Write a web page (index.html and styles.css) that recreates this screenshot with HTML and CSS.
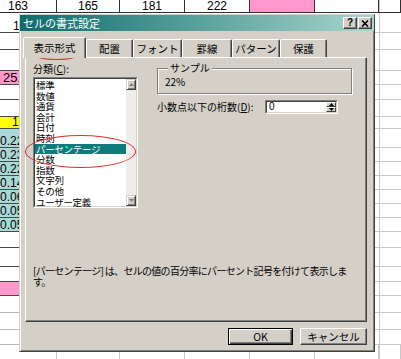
FILE: index.html
```html
<!DOCTYPE html>
<html lang="ja">
<head>
  <meta charset="UTF-8">
  <title>セルの書式設定</title>
  <link rel="stylesheet" href="styles.css">
</head>
<body>
  <!-- worksheet behind the dialog -->
  <div class="sheet">
    <div class="row top">
      <div class="col w1 first">163</div>
      <div class="col w2">165</div>
      <div class="col w3">181</div>
      <div class="col w3">222</div>
      <div class="col w3 pink"></div>
      <div class="col w4"></div>
      <div class="col"></div>
    </div>
    <div class="row h19"><div class="cell pl13">182</div></div>
    <div class="row h16"><div class="cell"></div></div>
    <div class="row h20"><div class="cell"></div></div>
    <div class="row h13"><div class="cell pink big">25.0</div></div>
    <div class="row h14"><div class="cell"></div></div>
    <div class="row h16"><div class="cell"></div></div>
    <div class="row h11"><div class="cell yellow pl12">1.00</div></div>
    <div class="row h18"><div class="cell teal">0.22</div></div>
    <div class="row h13"><div class="cell teal">0.23</div></div>
    <div class="row h13"><div class="cell teal">0.22</div></div>
    <div class="row h13"><div class="cell teal">0.14</div></div>
    <div class="row h13"><div class="cell teal">0.06</div></div>
    <div class="row h13"><div class="cell teal">0.05</div></div>
    <div class="row h13"><div class="cell teal">0.05</div></div>
    <div class="row h15"><div class="cell"></div></div>
    <div class="row h18"><div class="cell"></div></div>
    <div class="row h14"><div class="cell"></div></div>
    <div class="row h13"><div class="cell pink"></div></div>
    <div class="row h16"><div class="cell light"></div></div>
    <div class="row h16"><div class="cell light"></div></div>
    <div class="row h14"><div class="cell light"></div></div>
    <div class="row bottom">
      <div class="col w1"></div>
      <div class="col w2"></div>
      <div class="col w3"></div>
      <div class="col w3"></div>
      <div class="col w3"></div>
      <div class="col w4"></div>
      <div class="col"></div>
    </div>
  </div>

  <!-- Format Cells dialog -->
  <div class="dialog">
    <div class="titlebar">
      <span class="title">セルの書式設定</span>
      <div class="caption-buttons">
        <span class="cap-btn">?</span>
        <span class="cap-btn">
          <svg width="8" height="7" viewBox="0 0 8 7"><path d="M1 0.5 L7 6.5 M7 0.5 L1 6.5" stroke="#000" stroke-width="1.6"/></svg>
        </span>
      </div>
    </div>

    <div class="tabs">
      <div class="tab active">表示形式</div>
      <div class="tab t-align">配置</div>
      <div class="tab t-font">フォント</div>
      <div class="tab t-border">罫線</div>
      <div class="tab t-pattern">パターン</div>
      <div class="tab t-protect">保護</div>
    </div>

    <div class="panel">
      <div class="panel-main">
        <div class="category">
          <div class="label">分類(<u>C</u>):</div>
          <div class="listbox">
            <div class="listbox-inner">
              <ul class="list">
                <li>標準</li>
                <li>数値</li>
                <li>通貨</li>
                <li>会計</li>
                <li>日付</li>
                <li>時刻</li>
                <li class="selected">パーセンテージ</li>
                <li>分数</li>
                <li>指数</li>
                <li>文字列</li>
                <li>その他</li>
                <li>ユーザー定義</li>
              </ul>
              <div class="vscroll">
                <span class="sbtn"><svg width="5" height="3" viewBox="0 0 5 3"><polygon points="2.5,0 5,3 0,3" fill="#808080"/></svg></span>
                <span class="track"></span>
                <span class="sbtn"><svg width="5" height="3" viewBox="0 0 5 3"><polygon points="0,0 5,0 2.5,3" fill="#808080"/></svg></span>
              </div>
            </div>
          </div>
        </div>

        <div class="options">
          <fieldset class="sample">
            <legend>サンプル</legend>
            <div class="sample-value">22%</div>
          </fieldset>
          <div class="digits">
            <span class="digits-label">小数点以下の桁数(<u>D</u>):</span>
            <div class="spin">
              <div class="spin-inner">
                <span class="spin-value">0</span>
                <span class="spin-btns">
                  <span class="spin-btn"><svg width="5" height="3" viewBox="0 0 5 3"><polygon points="2.5,0 5,3 0,3" fill="#000"/></svg></span>
                  <span class="spin-btn"><svg width="5" height="3" viewBox="0 0 5 3"><polygon points="0,0 5,0 2.5,3" fill="#000"/></svg></span>
                </span>
              </div>
            </div>
          </div>
        </div>
      </div>

      <p class="desc">[パーセンテージ] は、セルの値の百分率にパーセント記号を付けて表示しま<br>す。</p>
    </div>

    <div class="buttons">
      <button class="btn default">OK</button>
      <button class="btn cancel">キャンセル</button>
    </div>
  </div>

  <!-- red annotation circles -->
  <div class="mark mark-tab"></div>
  <div class="mark mark-item"></div>
</body>
</html>
```

FILE: styles.css
```css
body {
  margin: 0;
  width: 401px;
  height: 359px;
  overflow: hidden;
  position: relative;
  font-family: "Noto Sans CJK JP", sans-serif;
  color: #000;
}

/* Worksheet */
.sheet {
  height: 359px;
  overflow: hidden;
  font: 12px "Liberation Sans", Arial, sans-serif;
  background: #fff linear-gradient(#c8c8c8, #c8c8c8) 379px 0 / 1px 100% no-repeat;
}

.row {
  display: flex;
  border-bottom: 1px solid #c8c8c8;
}

.h11 { height: 11px; }
.h13 { height: 13px; }
.h14 { height: 14px; }
.h15 { height: 15px; }
.h16 { height: 16px; }
.h18 { height: 18px; }
.h19 { height: 19px; }
.h20 { height: 20px; }

/* excel puts values at the bottom of the cell */
.cell {
  width: 57px;
  display: flex;
  align-items: flex-end;
  line-height: 12px;
  box-shadow: 0 1px #4a4a4a;
  white-space: nowrap;
  overflow: hidden;
}

.cell.light {
  box-shadow: 0 1px #b8b8b8;
}

.pl12 { padding-left: 12px; }
.pl13 { padding-left: 13px; }

.pink { background-color: #ff99cc; }
.yellow {
  background-color: #ffff00;
  line-height: 11px;
}
.teal { background-color: #a9d9d6; }

.big {
  font-size: 13px;
  padding-left: 3px;
}

.row.top {
  height: 12px;
  border-bottom: 1px solid #303030;
}

.row.bottom {
  height: 14px;
  border-bottom: none;
}

.col {
  box-sizing: border-box;
  border-right: 1px solid #303030;
  display: flex;
  align-items: flex-end;
  justify-content: center;
  font-size: 12px;
  line-height: 12px;
  flex: 1;
}

.row.bottom .col {
  border-right-color: #c8c8c8;
}

.w1 { width: 57px; flex: none; }
.w2 { width: 63px; flex: none; }
.w3 { width: 65px; flex: none; }
.w4 { width: 64px; flex: none; }

.first {
  justify-content: flex-start;
  padding-left: 8px;
}

/* Dialog */
.dialog {
  position: absolute;
  left: 19px;
  top: 14px;
  width: 356px;
  height: 338px;
  box-sizing: border-box;
  background: #d4d0c8;
  border: 1px solid;
  border-color: #d4d0c8 #404040 #404040 #d4d0c8;
  box-shadow: inset 1px 1px #fff, inset -1px -1px #808080;
  display: flex;
  flex-direction: column;
}

.titlebar {
  height: 16px;
  display: flex;
  align-items: center;
  justify-content: space-between;
  padding: 0 2px 0 3px;
  background: linear-gradient(to right, #0b6c6c, #a9d5cc);
  color: #fff;
  font-size: 11px;
  line-height: 16px;
}

.caption-buttons {
  display: flex;
  gap: 1px;
}

.cap-btn {
  width: 14px;
  height: 12px;
  box-sizing: border-box;
  background: #d4d0c8;
  border: 1px solid;
  border-color: #fff #404040 #404040 #fff;
  box-shadow: inset -1px -1px #808080;
  display: flex;
  align-items: center;
  justify-content: center;
  color: #000;
  font: bold 10px/10px "Liberation Sans", Arial, sans-serif;
}

/* Tabs */
.tabs {
  display: flex;
  align-items: flex-end;
  height: 20px;
  margin: 6px 0 0 3px;
  position: relative;
  z-index: 1;
}

.tab {
  height: 18px;
  box-sizing: border-box;
  border: 1px solid;
  border-bottom: none;
  border-color: #fff #404040 transparent #fff;
  box-shadow: inset -1px 0 #808080;
  border-radius: 2px 2px 0 0;
  font-size: 10.5px;
  line-height: 17px;
  text-align: center;
  background: #d4d0c8;
}

.tab.active {
  width: 63px;
  height: 21px;
  margin-bottom: -1px;
  line-height: 19px;
}

.t-align { width: 47px; }
.t-font { width: 49px; }
.t-border { width: 50px; }
.t-pattern { width: 48px; }
.t-protect { width: 47px; }

/* Tab page */
.panel {
  margin-left: 5px;
  width: 342px;
  height: 265px;
  box-sizing: border-box;
  border: 1px solid;
  border-color: #fff #404040 #404040 #fff;
  box-shadow: inset -1px -1px #808080;
  padding: 5px 0 0 7px;
}

.panel-main {
  display: flex;
  align-items: flex-start;
}

.category {
  width: 105px;
}

.label {
  font-size: 10px;
  line-height: 12px;
  margin-bottom: 2px;
}

.listbox {
  height: 131px;
  box-sizing: border-box;
  border: 1px solid;
  border-color: #808080 #fff #fff #808080;
}

.listbox-inner {
  height: 100%;
  box-sizing: border-box;
  display: flex;
  border: 1px solid;
  border-color: #404040 #d4d0c8 #d4d0c8 #404040;
}

.list {
  flex: 1;
  margin: 0;
  padding: 1px 0 0;
  list-style: none;
  background: #fff;
  font-size: 9.5px;
  line-height: 10.6px;
  letter-spacing: -0.3px;
}

.list li {
  padding-left: 1px;
  white-space: nowrap;
}

.list li.selected {
  background: #0f7a7a;
  color: #fff;
}

.vscroll {
  width: 10px;
  display: flex;
  flex-direction: column;
  background: #efede9;
}

.sbtn {
  height: 11px;
  box-sizing: border-box;
  background: #d4d0c8;
  border: 1px solid;
  border-color: #d4d0c8 #404040 #404040 #d4d0c8;
  box-shadow: inset 1px 1px #fff, inset -1px -1px #808080;
  display: flex;
  align-items: center;
  justify-content: center;
}

.track {
  flex: 1;
}

.options {
  margin-left: 19px;
}

.sample {
  width: 195px;
  height: 31px;
  box-sizing: border-box;
  margin: 0;
  padding: 3px 0 0 7px;
  border: 1px solid #808080;
  box-shadow: inset 1px 1px #fff, 1px 1px #fff;
}

.sample legend {
  margin-left: 3px;
  padding: 0 2px;
  font-size: 10px;
  line-height: 10px;
  background: #d4d0c8;
}

.sample-value {
  font-size: 10px;
  line-height: 12px;
}

.digits {
  display: flex;
  align-items: center;
  margin-top: 6px;
}

.digits-label {
  width: 108px;
  font-size: 10px;
  line-height: 12px;
  white-space: nowrap;
}

.spin {
  width: 73px;
  height: 14px;
  box-sizing: border-box;
  border: 1px solid;
  border-color: #808080 #fff #fff #808080;
}

.spin-inner {
  height: 100%;
  box-sizing: border-box;
  display: flex;
  border: 1px solid;
  border-color: #404040 #d4d0c8 #d4d0c8 #404040;
  background: #fff;
}

.spin-value {
  flex: 1;
  padding-left: 2px;
  font: 10px/10px "Liberation Sans", Arial, sans-serif;
}

.spin-btns {
  width: 10px;
  display: flex;
  flex-direction: column;
}

.spin-btn {
  flex: 1;
  box-sizing: border-box;
  background: #d4d0c8;
  border: 1px solid;
  border-color: #fff #404040 #404040 #fff;
  display: flex;
  align-items: center;
  justify-content: center;
}

.desc {
  margin: 57px 0 0;
  font-size: 10px;
  line-height: 11px;
  letter-spacing: -0.7px;
  white-space: nowrap;
}

/* OK / Cancel */
.buttons {
  display: flex;
  justify-content: flex-end;
  gap: 7px;
  margin: 6px 7px 0 0;
}

.btn {
  height: 17px;
  padding: 0;
  font-family: "Noto Sans CJK JP", sans-serif;
  font-size: 10.5px;
  line-height: 14px;
  color: #000;
  background: #d4d0c8;
  border: 1px solid;
  border-color: #fff #404040 #404040 #fff;
  box-shadow: inset -1px -1px #808080;
}

.btn.default {
  width: 65px;
  border-color: #000;
  box-shadow: inset 1px 1px #fff, inset -1px -1px #404040, inset -2px -2px #808080;
}

.btn.cancel {
  width: 67px;
}

/* Annotation ellipses */
.mark {
  position: absolute;
  border: 1px solid #e0302e;
  border-radius: 50%;
}

.mark-tab {
  left: 24px;
  top: 38px;
  width: 63px;
  height: 20px;
}

.mark-item {
  left: 25px;
  top: 135px;
  width: 109px;
  height: 31px;
}
```
